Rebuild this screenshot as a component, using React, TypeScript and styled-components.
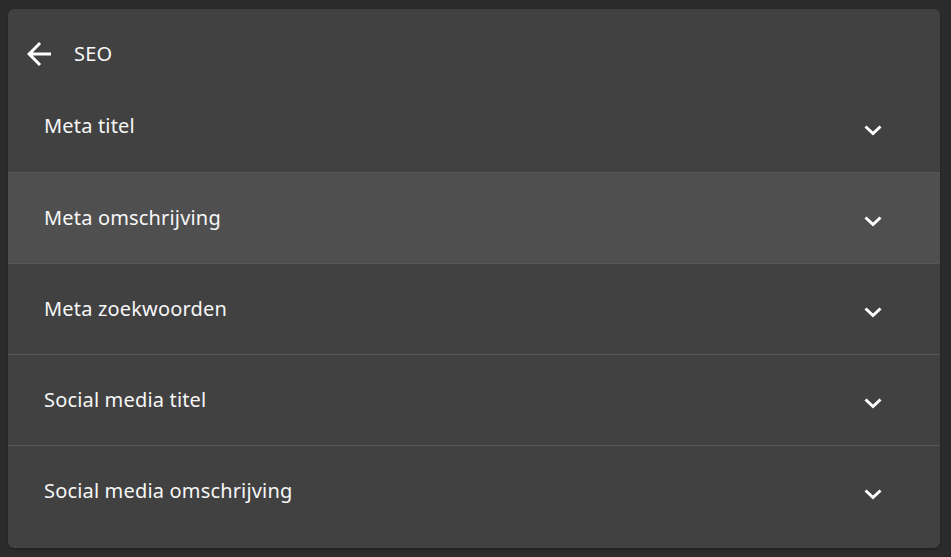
import React from "react";
import styled, { createGlobalStyle } from "styled-components";

const GlobalStyle = createGlobalStyle`
  html, body {
    margin: 0;
    padding: 0;
    background: #2b2b2b;
  }
  body {
    font-family: "Noto Sans", Lato, sans-serif;
  }
`;

const Page = styled.div`
  padding: 9px 11px 8px 8px;
`;

const Card = styled.section`
  background: #414141;
  border-radius: 6px;
  overflow: hidden;
  padding-bottom: 12px;
  box-shadow: 0 1px 2px rgba(0, 0, 0, 0.3);
`;

const Header = styled.header`
  height: 72px;
  box-sizing: border-box;
  padding: 16px 0 0 13px;
  display: flex;
  align-items: center;
  gap: 17px;
  color: #f7f7f7;
`;

const BackButton = styled.button`
  background: none;
  border: 0;
  padding: 0;
  width: 36px;
  height: 36px;
  display: flex;
  color: #fff;
  cursor: pointer;
  margin-top: 2px;
`;

const Title = styled.h1`
  margin: 0;
  font-size: 20px;
  font-weight: 400;
  letter-spacing: 0.2px;
`;

const Row = styled.div<{ $active?: boolean; $first?: boolean }>`
  height: 91px;
  display: flex;
  align-items: center;
  justify-content: space-between;
  padding: 0 57px 0 36px;
  background: ${(p) => (p.$active ? "#4f4f4f" : "transparent")};
  border-top: ${(p) => (p.$first ? "none" : "1px solid #575757")};
  box-sizing: border-box;
  color: #f7f7f7;
  font-size: 20px;
  letter-spacing: 0.17px;
  cursor: pointer;
`;

const Label = styled.span`
  margin-top: -2px;
`;

const Chevron = styled.svg`
  width: 20px;
  height: 12px;
  margin-top: 6px;
`;

const items = [
  "Meta titel",
  "Meta omschrijving",
  "Meta zoekwoorden",
  "Social media titel",
  "Social media omschrijving",
];

export default function App() {
  return (
    <>
      <GlobalStyle />
      <Page>
        <Card>
          <Header>
            <BackButton aria-label="Terug">
              <svg viewBox="0 0 24 24" width="36" height="36" fill="currentColor">
                <path d="M20 11H7.83l5.59-5.59L12 4l-8 8 8 8 1.41-1.41L7.83 13H20v-2z" />
              </svg>
            </BackButton>
            <Title>SEO</Title>
          </Header>
          {items.map((item, i) => (
            <Row key={item} $first={i === 0} $active={i === 1}>
              <Label>{item}</Label>
              <Chevron viewBox="0 0 20 12">
                <path
                  d="M2.5 2.5 10 9.5 17.5 2.5"
                  fill="none"
                  stroke="#fff"
                  strokeWidth="3"
                />
              </Chevron>
            </Row>
          ))}
        </Card>
      </Page>
    </>
  );
}
